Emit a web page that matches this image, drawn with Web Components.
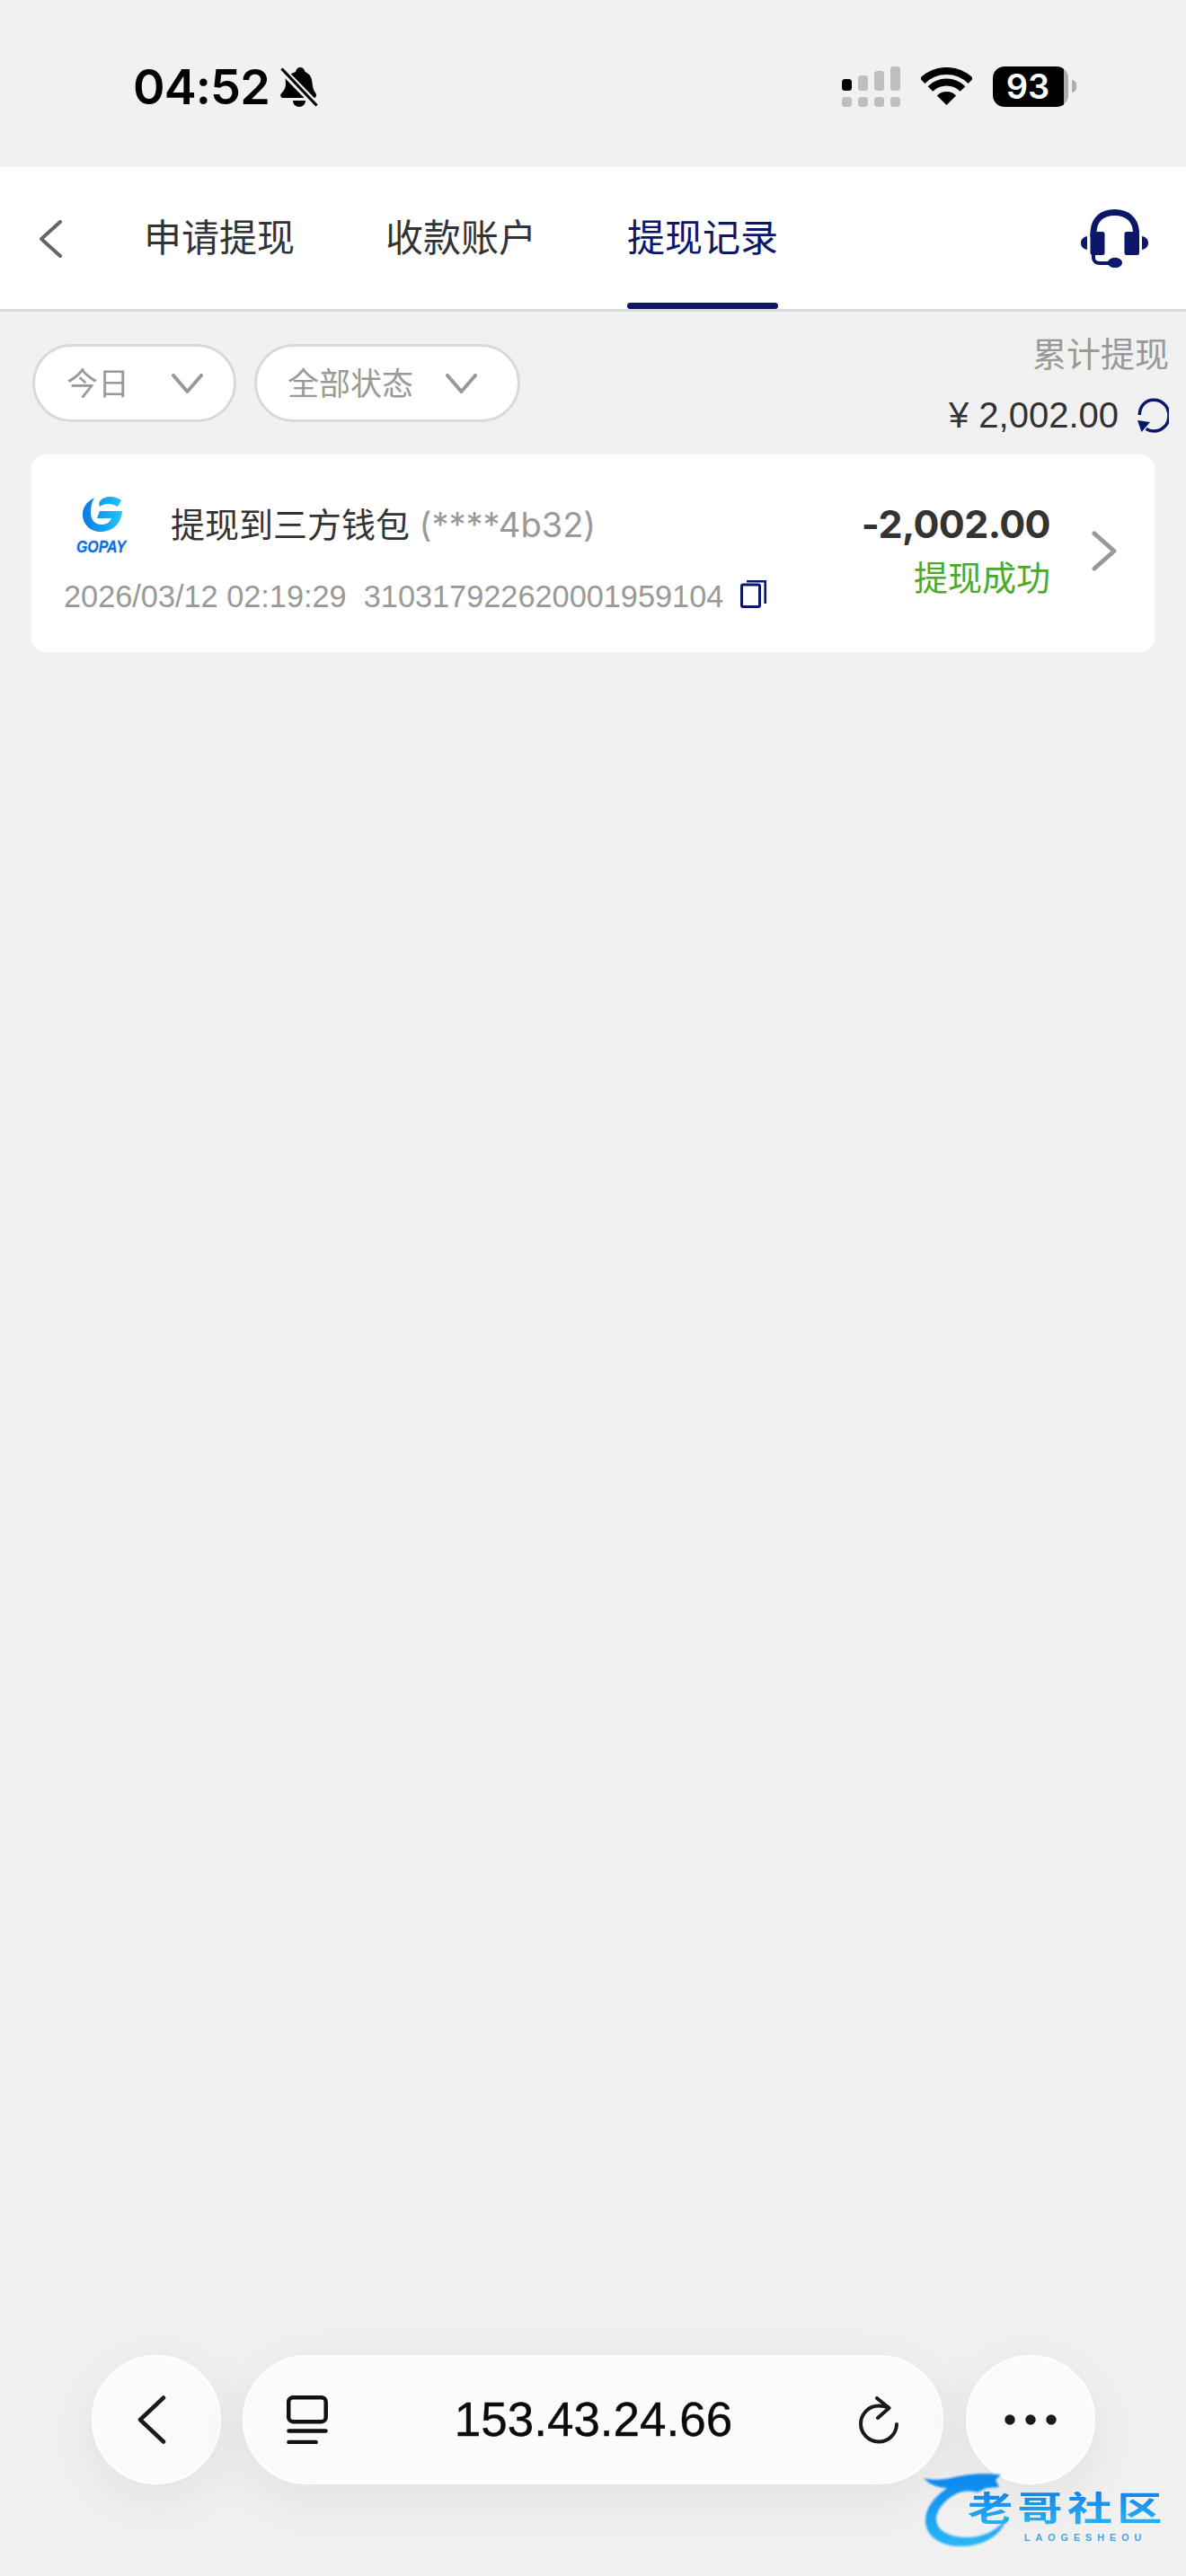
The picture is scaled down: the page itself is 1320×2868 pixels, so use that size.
<!DOCTYPE html>
<html lang="zh"><head><meta charset="utf-8"><title>提现记录</title>
<style>
html,body{margin:0;padding:0;background:#f1f1f1}
body{font-family:"Liberation Sans","Noto Sans CJK SC",sans-serif}
</style></head><body>
<app-page>
  <status-bar></status-bar>
  <tab-header></tab-header>
  <filter-row>
    <filter-pill label="今日" style="--w:227px;--gap:47px"></filter-pill>
    <filter-pill label="全部状态" style="--w:296px;--gap:36px;--pad:34px"></filter-pill>
  </filter-row>
  <record-card></record-card>
  <browser-bar></browser-bar>
  <water-mark></water-mark>
</app-page>
<script>
const FONT='"Liberation Sans","Noto Sans CJK SC",sans-serif';
const NAVY='#0c1769';
function def(name,html,init){
  customElements.define(name,class extends HTMLElement{
    connectedCallback(){
      if(this.shadowRoot)return;
      const r=this.attachShadow({mode:'open'});
      r.innerHTML=typeof html==='function'?html(this):html;
    }
  });
}
def('app-page',`<style>
:host{display:flex;flex-direction:column;position:relative;width:1320px;height:2868px;overflow:hidden;background:#f1f1f1;font-family:${FONT}}
</style><slot></slot>`);

def('status-bar',`<style>
:host{display:flex;box-sizing:border-box;height:186px;padding:75px 122px 0 148px;justify-content:space-between;align-items:flex-start;color:#000}
.l{display:flex;align-items:flex-start;gap:12px}
.t{font:600 54px/44px Inter,"Liberation Sans",sans-serif;letter-spacing:-.9px;height:44px}
.r{display:flex;align-items:flex-start;gap:23px;margin-top:-1px}
svg{display:block}
.batt{position:relative;display:flex;width:93px;height:45px}
.cell{width:84px;height:45px;border-radius:13px;background:linear-gradient(90deg,#000 0 79px,#adadad 79px);color:#fff;font:600 38px/45px Inter,"Liberation Sans",sans-serif;text-align:center;box-sizing:border-box;padding-right:6px}
.nub{width:5px;height:14px;margin:15px 0 0 4px;background:#adadad;border-radius:0 7px 7px 0}
</style>
<div class="l"><span class="t">04:52</span>
<svg width="42" height="45" viewBox="0 0 42 45" style="margin-top:0"><path d="M22 0c3 0 5 2 5.500 5 5 2 7.500 6 8 12 .5 6 2 9 4 12 1 2 .5 5-2 5H3c-3 0-3.500-3-2-5 3-3 4-5 5-9l-.5-10L17 5c.5-3 2.500-5 5-5zM14 37h14c0 4-3 7-7 7s-7-3-7-7z" fill="#000"/><path d="M2 3l38 39" stroke="#f1f1f1" stroke-width="8"/><path d="M1.500 1.500l39 41" stroke="#000" stroke-width="3.200"/></svg></div>
<div class="r">
<svg width="65" height="45" viewBox="0 0 65 45"><rect x="0" y="14" width="11" height="13" rx="3.500"/><g fill="#bfbfbf"><rect x="18" y="10" width="11" height="17" rx="3.500"/><rect x="36" y="5" width="11" height="22" rx="3.500"/><rect x="54" y="0" width="11" height="27" rx="3.500"/><rect x="0" y="34" width="11" height="11" rx="3.500"/><rect x="18" y="34" width="11" height="11" rx="3.500"/><rect x="36" y="34" width="11" height="11" rx="3.500"/><rect x="54" y="34" width="11" height="11" rx="3.500"/></g></svg>
<svg width="57" height="43" viewBox="0 0 57 43" style="margin-top:1px"><g fill="none" stroke="#000" stroke-width="8"><path d="M1.600 15.100A38 38 0 0 1 55.400 15.100"/><path d="M10.500 24A25.500 25.500 0 0 1 46.500 24"/></g><path d="M28.500 42L17.900 31.400A15 15 0 0 1 39.100 31.400Z"/></svg>
<div class="batt"><div class="cell">93</div><div class="nub"></div></div>
</div>`);

def('tab-header',`<style>
:host{display:flex;box-sizing:border-box;height:161px;background:#fff;border-bottom:3px solid #d9d9d9;padding-left:43px;padding-right:42px;align-items:stretch;font-size:42px;color:#333}
.back{align-self:center;display:block;margin-top:2px;margin-right:91px}
.tabs{display:flex;gap:101px;flex:1}
.tab{display:flex;position:relative;align-items:center;line-height:1;padding-top:2px;box-sizing:border-box}
.on{color:${NAVY};position:relative}
.on::after{content:"";position:absolute;left:0;right:0;bottom:0;height:7px;background:${NAVY};border-radius:4px}
.hs{align-self:center;display:block;margin-top:0}
</style>
<svg class="back" width="26" height="42" viewBox="0 0 26 42"><path d="M24 2L3 21l21 19" fill="none" stroke="#666" stroke-width="4" stroke-linecap="round" stroke-linejoin="round"/></svg>
<div class="tabs"><div class="tab">申请提现</div><div class="tab">收款账户</div><div class="tab on">提现记录</div></div>
<svg class="hs" width="75" height="65" viewBox="0 0 75 65" fill="${NAVY}"><path d="M14 30V27C14 11 24 3.500 37.500 3.500S61.500 11 61.500 27v3" fill="none" stroke="${NAVY}" stroke-width="7"/><rect x="10.500" y="25" width="16" height="26" rx="2.500"/><rect x="48.500" y="25" width="16.500" height="26" rx="2.500"/><path d="M7 30v15C2 44 0 41 0 37.500S2 31 7 30zM68 30v15c5-1 7-4 7-7.500S73 31 68 30z"/><path d="M14 50v4c0 4 3 6 7 6h12" fill="none" stroke="${NAVY}" stroke-width="4"/><ellipse cx="38" cy="59.500" rx="8" ry="5.700"/></svg>`);

def('filter-row',`<style>
:host{display:flex;box-sizing:border-box;height:159px;padding:0 19px 0 36px;align-items:flex-start;justify-content:space-between}
.p{display:flex;gap:20px;padding-top:36px}
.t{display:flex;flex-direction:column;align-items:flex-end;padding-top:26px}
.lab{font-size:38px;line-height:44px;color:#999}
.amt{display:flex;align-items:center;margin-top:22px;color:#333;font-size:40px;line-height:46px;gap:20px}
svg{display:block}
</style>
<div class="p"><slot></slot></div>
<div class="t"><div class="lab">累计提现</div><div class="amt"><span>¥ 2,002.00</span>
<svg width="36" height="39" viewBox="0 0 36 39"><path d="M3.200 19C3.500 9 10 2.200 19 2.200 28 2.200 36 9 36 20 36 30 28 37 19 37c-3.500 0-6-1-8.500-2.500" fill="none" stroke="${NAVY}" stroke-width="3.500"/><path d="M1 25l14 2-9.500 11z" fill="${NAVY}"/></svg></div></div>`);

def('filter-pill',h=>`<style>
:host{display:block}
.b{box-sizing:border-box;display:flex;align-items:center;width:var(--w);height:87px;padding:0 0 0 var(--pad,35px);border:3px solid #d9d9d9;border-radius:44px;background:#fff;color:#999;font-size:35px;line-height:1;white-space:nowrap}
span{padding-top:2px}
svg{display:block;flex:none;margin-left:var(--gap)}
</style><div class="b"><span>${h.getAttribute('label')}</span>
<svg width="35" height="22" viewBox="0 0 35 22"><path d="M2 2l15.500 18L33 2" fill="none" stroke="#999" stroke-width="4" stroke-linecap="round" stroke-linejoin="round"/></svg></div>`);

def('record-card',`<style>
:host{display:flex;box-sizing:border-box;margin-left:35px;width:1250px;height:220px;background:#fff;border-radius:16px;padding:0 42px 0 36px;align-items:stretch;color:#333}
.m{flex:1;display:flex;flex-direction:column;min-width:0}
.top{display:flex;align-items:flex-start;padding-top:45px}
.logo{display:block;margin-left:14px;margin-right:49px;margin-bottom:-6px;overflow:visible}
.title{font-size:38px;line-height:46px;margin-top:10px;white-space:pre}
.title span{color:#999;font-family:Inter,"Liberation Sans",sans-serif}
.meta{display:flex;align-items:center;margin-top:27px;color:#999;font-size:34.300px;line-height:44px;white-space:pre}
.copy{display:block;margin-left:19px;margin-top:-5px}
.a{display:flex;flex-direction:column;align-items:flex-end;padding-top:52px}
.n{font:700 43px/50px Inter,"Liberation Sans",sans-serif;letter-spacing:-.6px}
.s{color:#4aab2a;font-size:38px;line-height:46px;margin-top:13px}
.arr{display:block;align-self:center;margin-left:46px;margin-top:-6px}
</style>
<div class="m"><div class="top">
<svg class="logo" width="56" height="70" viewBox="0 0 56 70"><defs><linearGradient id="g" x1="0" y1="0" x2="1" y2="0"><stop offset="0" stop-color="#0b78e3"/><stop offset="1" stop-color="#22c6f7"/></linearGradient></defs>
<path fill="url(#g)" d="M20 3C11 8 7 14 7 22c0 11 9 19 20 19 13 0 23-9 24-23H26l-3 8h16c-2 5-6 7-11 7-8 0-12-6-12-13 0-6 1-12 4-17zM26 7C31 1 42 0 50 6l-4 7C39 9 31 9 26 13 25 11 25 9 26 7z"/>
<text x="0" y="63.500" font-family="Liberation Sans" font-weight="700" font-style="italic" font-size="17.500" fill="#0b6fe0" stroke="#0b6fe0" stroke-width=".3" textLength="55" lengthAdjust="spacingAndGlyphs">GOPAY</text></svg>
<div class="title">提现到三方钱包 <span>(****4b32)</span></div></div>
<div class="meta"><span>2026/03/12 02:19:29  310317922620001959104</span>
<svg class="copy" width="29" height="31" viewBox="0 0 29 31" fill="none" stroke="${NAVY}"><rect x="1.500" y="5" width="20" height="24.500" rx="1.500" stroke-width="3"/><path d="M7 1.300H27.700V26" stroke-width="2.600"/></svg></div></div>
<div class="a"><div class="n">-2,002.00</div><div class="s">提现成功</div></div>
<svg class="arr" width="28" height="45" viewBox="0 0 28 45"><path d="M3 3l22 19.500L3 42" fill="none" stroke="#999" stroke-width="5" stroke-linecap="round" stroke-linejoin="round"/></svg>`);

def('browser-bar',`<style>
:host{display:flex;box-sizing:border-box;margin-top:auto;margin-bottom:102px;padding-left:102px;height:144px;align-items:stretch;color:#000}
.c,.u{box-sizing:border-box;background:#fbfbfb;border:2px solid #fff;box-shadow:0 16px 70px rgba(0,0,0,.075);display:flex;align-items:center}
.c{width:144px;justify-content:center;border-radius:72px}
.u{width:780px;margin:0 25px 0 24px;border-radius:72px;padding:0 48px 0 47px;justify-content:space-between}
.txt{font-size:53px;line-height:60px;color:#0a0a0a;-webkit-text-stroke:.4px #0a0a0a}
svg{display:block}
</style>
<div class="c"><svg width="32" height="54" viewBox="0 0 32 54" style="margin-left:-10px"><path d="M29 2.500L3 27l26 24.500" fill="none" stroke="#1a1a1a" stroke-width="4.500" stroke-linecap="round" stroke-linejoin="round"/></svg></div>
<div class="u">
<svg width="46" height="54" viewBox="0 0 46 54" fill="none" stroke="#111" stroke-width="4.500" stroke-linecap="round"><rect x="2.200" y="2.200" width="41.500" height="27" rx="5"/><path d="M2.500 39.500h41M2.500 52h30"/></svg>
<span class="txt">153.43.24.66</span>
<svg width="44" height="53" viewBox="0 0 44 53" fill="none" stroke="#1a1a1a" stroke-width="4" stroke-linecap="round" stroke-linejoin="round"><path d="M33 12.500C29 11 25.500 10.500 22 10.500A20 20 0 1 0 42 31"/><path d="M20 2l13.500 11L21 24"/></svg></div>
<div class="c"><svg width="58" height="12" viewBox="0 0 58 12" fill="#1a1a1a"><circle cx="6" cy="6" r="5.700"/><circle cx="29" cy="6" r="5.700"/><circle cx="52" cy="6" r="5.700"/></svg></div>`);

def('water-mark',`<style>
:host{position:absolute;left:1028px;top:2750px;width:272px;height:86px;display:block;pointer-events:none}
svg{position:absolute;left:0;top:0;filter:blur(.8px)}
.cn{position:absolute;left:49px;top:24px;font:700 38px/38px "Liberation Sans","Noto Sans CJK SC",sans-serif;letter-spacing:4px;color:transparent;background:linear-gradient(180deg,#1283ea,#2ab4f4);-webkit-background-clip:text;background-clip:text;white-space:nowrap;transform:scaleX(1.32);transform-origin:0 0;filter:blur(.6px)}
.en{position:absolute;left:112px;top:69px;font:700 11px/12px "Liberation Sans",sans-serif;letter-spacing:5.800px;color:#3fa4ea;white-space:nowrap;filter:blur(.5px)}
</style>
<svg width="272" height="86" viewBox="0 0 272 86"><defs><linearGradient id="d" x1="0" y1="0" x2="0" y2="1"><stop offset="0" stop-color="#0b86ee"/><stop offset="1" stop-color="#2cb6f6"/></linearGradient></defs>
<path fill="url(#d)" d="M0 9c10 3 22 2 34-1 14-3 28-5 52-3l-6 6 4 8-14 1-10 5c-8-2-14-2-20 0C26 30 14 44 14 54c0 12 12 21 34 21 18 0 32-7 44-20-6 18-26 30-50 30C16 85 2 72 2 56 2 42 12 30 26 20 16 20 6 16 0 9z"/></svg>
<div class="cn">老哥社区</div><div class="en">LAOGESHEOU</div>`);
</script>
</body></html>
